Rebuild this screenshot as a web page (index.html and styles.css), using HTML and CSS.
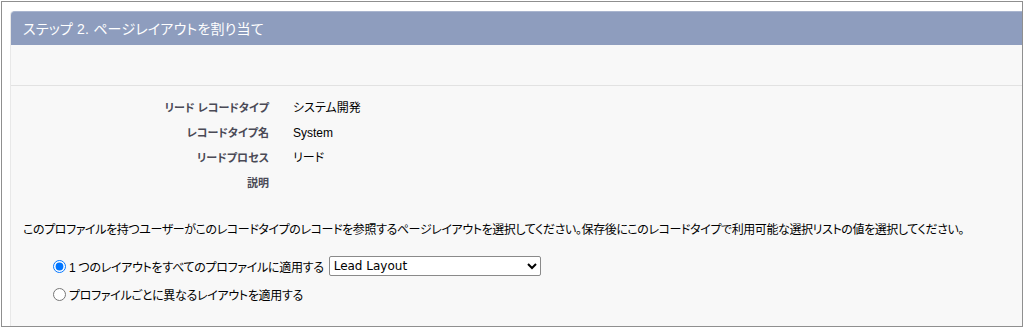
FILE: index.html
```html
<!DOCTYPE html>
<html>
<head>
    <meta charset="utf-8">
    <title>ページレイアウトを割り当て</title>
    <link rel="stylesheet" href="styles.css">
</head>
<body>
    <div class="frame">
        <div class="panel">
            <div class="panel-header">ステップ 2. ページレイアウトを割り当て</div>
            <div class="panel-spacer"></div>
            <div class="detail">
                <div class="label">リード レコードタイプ</div>
                <div class="value">システム開発</div>
                <div class="label">レコードタイプ名</div>
                <div class="value">System</div>
                <div class="label">リードプロセス</div>
                <div class="value">リード</div>
                <div class="label">説明</div>
                <div class="value"></div>
            </div>
            <p class="instructions">このプロファイルを持つユーザーがこのレコードタイプのレコードを参照するページレイアウトを選択してください。保存後にこのレコードタイプで利用可能な選択リストの値を選択してください。</p>
            <div class="choices">
                <label class="choice">
                    <input type="radio" name="layout" checked>
                    <span>1 つのレイアウトをすべてのプロファイルに適用する</span>
                    <select class="layout-select">
                        <option>Lead Layout</option>
                    </select>
                </label>
                <label class="choice">
                    <input type="radio" name="layout">
                    <span>プロファイルごとに異なるレイアウトを適用する</span>
                </label>
            </div>
        </div>
    </div>
</body>
</html>
```

FILE: styles.css
```css
body {
    margin: 0;
    background: #fff;
    font-family: 'Liberation Sans', 'Noto Sans CJK JP', sans-serif;
    font-feature-settings: "palt";
    font-size: 12px;
    color: #000;
}
.frame {
    box-sizing: border-box;
    width: 1022px;
    height: 326px;
    margin: 1px;
    border: 1px solid #8f8f8f;
    padding: 9px 0 0 8px;
    overflow: hidden;
}
.panel {
    background: #f8f8f8;
    border-left: 1px solid #e8e8e8;
    border-top-left-radius: 4px;
    height: 400px;
}
.panel-header {
    height: 34px;
    line-height: 34px;
    padding-left: 12px;
    background: #8e9dbe;
    border-top: 1px solid #a9b5cf;
    border-top-left-radius: 4px;
    box-sizing: border-box;
    color: #fff;
    font-size: 14px;
    letter-spacing: 0.2px;
}
.panel-spacer {
    height: 40px;
    border-bottom: 1px solid #e2e2e2;
}
.detail {
    display: grid;
    grid-template-columns: 258px 1fr;
    grid-auto-rows: 25px;
    column-gap: 24px;
    padding-top: 10px;
    line-height: 25px;
}
.label {
    text-align: right;
    font-size: 11px;
    font-weight: bold;
    color: #4a4a56;
}
.instructions {
    margin: 26px 0 0 12px;
    line-height: 16px;
    letter-spacing: -0.4px;
}
.choices {
    padding: 14px 0 0 37px;
}
.choice {
    display: flex;
    align-items: center;
    height: 28px;
    letter-spacing: -0.3px;
}
.choice input {
    margin: 0 3px 0 5px;
    width: 13px;
    height: 13px;
}
.layout-select {
    margin-left: 5px;
    width: 212px;
    height: 20px;
    font-family: 'DejaVu Sans', sans-serif;
    font-size: 12px;
    letter-spacing: 0;
    color: #000;
    background: #fff;
    border: 1px solid #8a8a8a;
    border-radius: 2px;
}
```
